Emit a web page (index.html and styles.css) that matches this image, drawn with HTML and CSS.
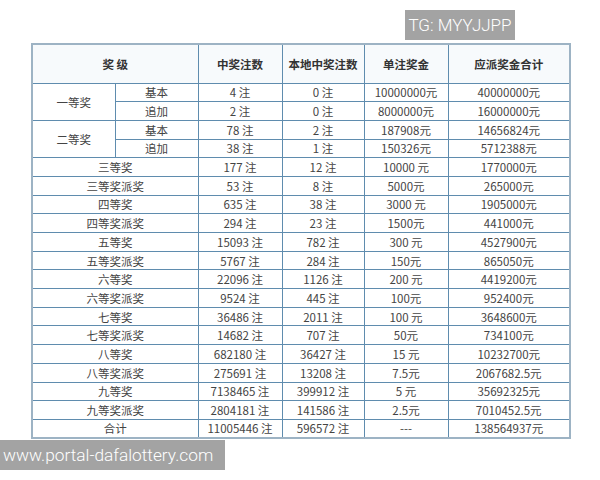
FILE: index.html
```html
<!DOCTYPE html>
<html lang="zh">
<head>
<meta charset="utf-8">
<title>奖级</title>
<link rel="stylesheet" href="styles.css">
</head>
<body>
<div class="page">
  <table class="prize">
    <colgroup>
      <col class="c-a"><col class="c-b"><col class="c-2"><col class="c-3"><col class="c-4"><col class="c-5">
    </colgroup>
    <thead>
      <tr class="head">
        <th colspan="2">奖 级</th>
        <th>中奖注数</th>
        <th>本地中奖注数</th>
        <th>单注奖金</th>
        <th>应派奖金合计</th>
      </tr>
    </thead>
    <tbody>
      <tr><td rowspan="2">一等奖</td><td>基本</td><td>4 注</td><td>0 注</td><td>10000000元</td><td>40000000元</td></tr>
      <tr><td>追加</td><td>2 注</td><td>0 注</td><td>8000000元</td><td>16000000元</td></tr>
      <tr><td rowspan="2">二等奖</td><td>基本</td><td>78 注</td><td>2 注</td><td>187908元</td><td>14656824元</td></tr>
      <tr><td>追加</td><td>38 注</td><td>1 注</td><td>150326元</td><td>5712388元</td></tr>
      <tr><td colspan="2">三等奖</td><td>177 注</td><td>12 注</td><td>10000 元</td><td>1770000元</td></tr>
      <tr><td colspan="2">三等奖派奖</td><td>53 注</td><td>8 注</td><td>5000元</td><td>265000元</td></tr>
      <tr><td colspan="2">四等奖</td><td>635 注</td><td>38 注</td><td>3000 元</td><td>1905000元</td></tr>
      <tr><td colspan="2">四等奖派奖</td><td>294 注</td><td>23 注</td><td>1500元</td><td>441000元</td></tr>
      <tr><td colspan="2">五等奖</td><td>15093 注</td><td>782 注</td><td>300 元</td><td>4527900元</td></tr>
      <tr><td colspan="2">五等奖派奖</td><td>5767 注</td><td>284 注</td><td>150元</td><td>865050元</td></tr>
      <tr><td colspan="2">六等奖</td><td>22096 注</td><td>1126 注</td><td>200 元</td><td>4419200元</td></tr>
      <tr><td colspan="2">六等奖派奖</td><td>9524 注</td><td>445 注</td><td>100元</td><td>952400元</td></tr>
      <tr><td colspan="2">七等奖</td><td>36486 注</td><td>2011 注</td><td>100 元</td><td>3648600元</td></tr>
      <tr><td colspan="2">七等奖派奖</td><td>14682 注</td><td>707 注</td><td>50元</td><td>734100元</td></tr>
      <tr><td colspan="2">八等奖</td><td>682180 注</td><td>36427 注</td><td>15 元</td><td>10232700元</td></tr>
      <tr><td colspan="2">八等奖派奖</td><td>275691 注</td><td>13208 注</td><td>7.5元</td><td>2067682.5元</td></tr>
      <tr><td colspan="2">九等奖</td><td>7138465 注</td><td>399912 注</td><td>5 元</td><td>35692325元</td></tr>
      <tr><td colspan="2">九等奖派奖</td><td>2804181 注</td><td>141586 注</td><td>2.5元</td><td>7010452.5元</td></tr>
      <tr><td colspan="2">合计</td><td>11005446 注</td><td>596572 注</td><td>---</td><td>138564937元</td></tr>
    </tbody>
  </table>
  <div class="mark mark-tg">TG: MYYJJPP</div>
  <div class="mark mark-url">www.portal-dafalottery.com</div>
</div>
</body>
</html>
```
FILE: styles.css
```css
html, body {
  margin: 0;
  padding: 0;
  background: #ffffff;
}
.page {
  position: relative;
  width: 600px;
  height: 480px;
  padding: 43px 0 0 31px;
  box-sizing: border-box;
  font-family: "Noto Sans CJK SC", "Noto Sans", sans-serif;
  color: #444;
}
.prize {
  border-collapse: collapse;
  table-layout: fixed;
  width: 538px;
  border: 2px solid #9db3c4;
  font-size: 11.5px;
}
.c-a { width: 83px; }
.c-b { width: 83px; }
.c-2 { width: 84px; }
.c-3 { width: 82px; }
.c-4 { width: 84px; }
.c-5 { width: 122px; }
.prize th, .prize td {
  border: 1px solid #5f8cae;
  text-align: center;
  padding: 0;
  line-height: 14px;
  white-space: nowrap;
}
.prize th {
  font-weight: bold;
  color: #333;
  background: #f7fafc;
}
.head { height: 39px; }
.prize tbody tr { height: 18.7px; }
.mark {
  position: absolute;
  background: #a3a3a3;
  color: #ffffff;
  font-family: Roboto, "Liberation Sans", sans-serif;
  font-weight: 300;
  white-space: nowrap;
}
.mark-tg {
  left: 405px;
  top: 10px;
  width: 110px;
  height: 30px;
  line-height: 30px;
  font-size: 17px;
  text-align: center;
}
.mark-url {
  left: 0;
  top: 440px;
  width: 225px;
  height: 30px;
  line-height: 30px;
  font-size: 17.3px;
  padding-left: 3px;
  box-sizing: border-box;
}
```
